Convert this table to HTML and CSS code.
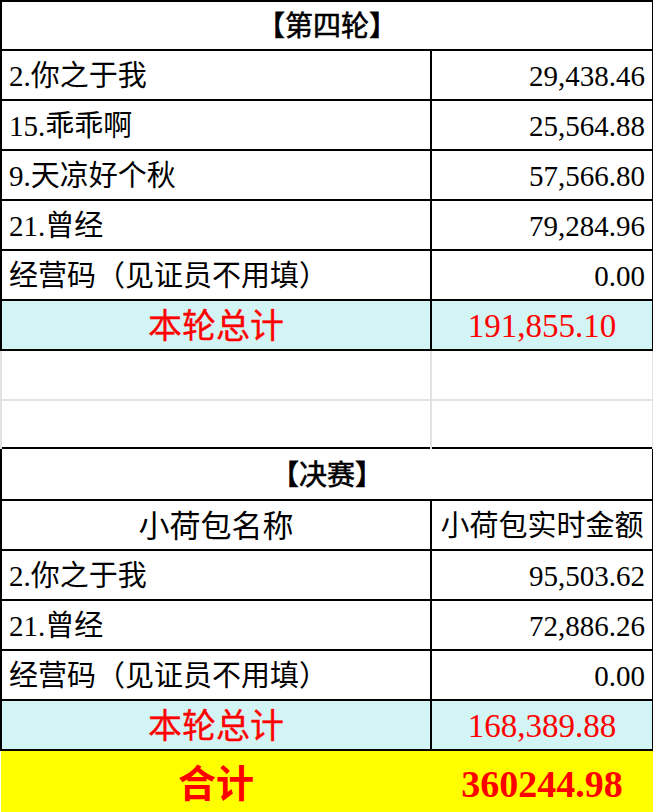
FILE: index.html
```html
<!DOCTYPE html>
<html lang="zh">
<head>
<meta charset="utf-8">
<title>小荷包统计</title>
<link rel="stylesheet" href="styles.css">
</head>
<body>
<table class="sheet">
  <colgroup><col class="c1"><col class="c2"></colgroup>
  <tr class="row-top"><td colspan="2" class="title">【第四轮】</td></tr>
  <tr class="row"><td class="name">2.你之于我</td><td class="num">29,438.46</td></tr>
  <tr class="row"><td class="name">15.乖乖啊</td><td class="num">25,564.88</td></tr>
  <tr class="row"><td class="name">9.天凉好个秋</td><td class="num">57,566.80</td></tr>
  <tr class="row"><td class="name">21.曾经</td><td class="num">79,284.96</td></tr>
  <tr class="row"><td class="name">经营码（见证员不用填）</td><td class="num">0.00</td></tr>
  <tr class="row total"><td class="t-label">本轮总计</td><td class="t-num">191,855.10</td></tr>
  <tr class="row blank first"><td></td><td></td></tr>
  <tr class="row-blank2 blank second"><td></td><td></td></tr>
  <tr class="row-final"><td colspan="2" class="title">【决赛】</td></tr>
  <tr class="row"><td class="head head-l">小荷包名称</td><td class="head">小荷包实时金额</td></tr>
  <tr class="row"><td class="name">2.你之于我</td><td class="num">95,503.62</td></tr>
  <tr class="row"><td class="name">21.曾经</td><td class="num">72,886.26</td></tr>
  <tr class="row"><td class="name">经营码（见证员不用填）</td><td class="num">0.00</td></tr>
  <tr class="row total"><td class="t-label">本轮总计</td><td class="t-num">168,389.88</td></tr>
  <tr class="grand"><td class="g-label">合计</td><td class="g-num">360244.98</td></tr>
</table>
</body>
</html>
```

FILE: styles.css
```css
html, body {
  margin: 0;
  padding: 0;
  background: #ffffff;
}

.sheet {
  border-collapse: collapse;
  table-layout: fixed;
  width: 652px;
  font-family: "Liberation Serif", "Noto Sans CJK SC", serif;
  font-size: 29px;
  color: #000000;
}

.c1 { width: 430px; }
.c2 { width: 222px; }

.sheet td {
  border: 2px solid #000000;
  padding: 3px 7px 0 7px;
  line-height: 1;
  white-space: nowrap;
  overflow: hidden;
  vertical-align: middle;
}

.row-top { height: 49px; }
.row { height: 50px; }
.row-blank2 { height: 48px; }
.row-final { height: 52px; }
.grand { height: 63px; }

.title {
  text-align: center;
  font-size: 28px;
  font-weight: 400;
  -webkit-text-stroke: 0.6px #000000;
}

.name { text-align: left; padding-left: 6px; }
.num { text-align: right; padding-right: 7px; }

.head { text-align: center; }
.sheet td.head { padding-left: 2px; padding-right: 2px; }
.head-l { font-size: 31px; }

.total td { background: #d2f4f4; color: #ff0000; }
.t-label { text-align: center; font-size: 34px; -webkit-text-stroke: 0.3px #ff0000; }
.t-num { text-align: center; font-size: 33px; }

.blank td {
  border-color: #e2e2e2;
  background: #ffffff;
}
.blank.first td { border-top: none; }
.blank.second td { border-top: none; border-bottom: none; }

.grand td {
  border-left: none;
  border-right: none;
  border-bottom: none;
  border-top: none;
  background: #ffff00;
  color: #ff0000;
  font-weight: 700;
  text-align: center;
}
.g-label { font-size: 38px; }
.g-num { font-size: 38px; }
```
